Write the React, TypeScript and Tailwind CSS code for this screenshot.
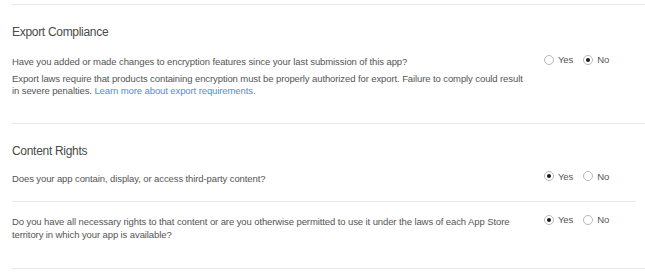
import React from "react";

function Radio({ checked, label }: { checked: boolean; label: string }) {
  return (
    <label className="flex items-center gap-[4px]">
      <span className="flex h-[10px] w-[10px] items-center justify-center rounded-full border border-[#b8b8b8] bg-white">
        {checked && <span className="h-[4px] w-[4px] rounded-full bg-[#1a1a1a]" />}
      </span>
      <span className="text-[#555]">{label}</span>
    </label>
  );
}

function RadioGroup({ value }: { value: "yes" | "no" }) {
  return (
    <div className="-mt-[3px] flex w-[92px] shrink-0 items-center gap-[10px] leading-[13px]">
      <Radio checked={value === "yes"} label="Yes" />
      <Radio checked={value === "no"} label="No" />
    </div>
  );
}

export default function App() {
  return (
    <div
      className="h-[273px] w-[645px] overflow-hidden bg-white pl-3 pt-1 text-[9.5px] leading-[12.5px] tracking-[-0.1px] text-[#555]"
      style={{ fontFamily: '"Liberation Sans", Arial, sans-serif' }}
    >
      <section className="border-t border-[#e8e8e8] pb-[25px]">
        <h2 className="pt-[19px] text-[12px] leading-[16px] tracking-[-0.3px] text-[#4a4a4a]">Export Compliance</h2>
        <div className="mt-[16px] flex items-start pr-[9px]">
          <div className="flex-1 pr-[14px]">
            <p>Have you added or made changes to encryption features since your last submission of this app?</p>
            <p className="mt-[4px]">
              Export laws require that products containing encryption must be properly authorized for export. Failure to
              comply could result in severe penalties.{" "}
              <span className="text-[#4a8fe0]">Learn more about export requirements.</span>
            </p>
          </div>
          <RadioGroup value="no" />
        </div>
      </section>
      <section className="border-t border-b border-[#e8e8e8]">
        <h2 className="pt-[19px] text-[12px] leading-[16px] tracking-[-0.3px] text-[#4a4a4a]">Content Rights</h2>
        <div className="mr-[9px] mt-[14px] flex items-start border-b border-[#e8e8e8] pb-[16px]">
          <div className="flex-1 pr-[14px]">
            <p>Does your app contain, display, or access third-party content?</p>
          </div>
          <RadioGroup value="yes" />
        </div>
        <div className="flex items-start pb-[27px] pr-[9px] pt-[14px]">
          <div className="flex-1 pr-[14px]">
            <p>
              Do you have all necessary rights to that content or are you otherwise permitted to use it under the laws of
              each App Store territory in which your app is available?
            </p>
          </div>
          <RadioGroup value="yes" />
        </div>
      </section>
    </div>
  );
}
